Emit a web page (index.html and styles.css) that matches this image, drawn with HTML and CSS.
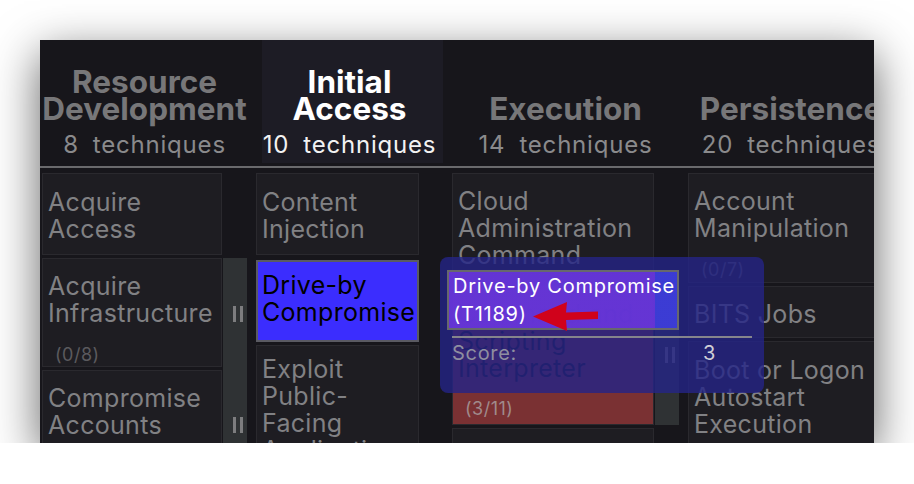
FILE: index.html
```html
<!DOCTYPE html>
<html lang="en">
<head>
<meta charset="utf-8">
<title>ATT&amp;CK Matrix</title>
<link rel="stylesheet" href="styles.css">
</head>
<body>
<div class="window">
  <div class="header">
    <div class="th th-rd">
      <div class="tname">Resource<br>Development</div>
      <div class="tcount"><span class="num">8</span>techniques</div>
    </div>
    <div class="th th-ia selected">
      <div class="tname">Initial<br>Access</div>
      <div class="tcount"><span class="num">10</span>techniques</div>
    </div>
    <div class="th th-ex">
      <div class="tname">Execution</div>
      <div class="tcount"><span class="num">14</span>techniques</div>
    </div>
    <div class="th th-pe">
      <div class="tname">Persistence</div>
      <div class="tcount"><span class="num">20</span>techniques</div>
    </div>
  </div>

  <div class="matrix">
    <div class="tactic t-rd">
      <div class="cell c1a">Acquire<br>Access</div>
      <div class="cell c1b">Acquire<br>Infrastructure<div class="count">(0/8)</div></div>
      <div class="side s1b"><span class="grip"></span></div>
      <div class="cell c1c">Compromise<br>Accounts<div class="count">(0/3)</div></div>
      <div class="side s1c"><span class="grip"></span></div>
    </div>

    <div class="tactic t-ia">
      <div class="cell c2a">Content<br>Injection</div>
      <div class="cell c2b blue">Drive-by<br>Compromise</div>
      <div class="cell c2c">Exploit<br>Public-<br>Facing<br>Application</div>
    </div>

    <div class="tactic t-ex">
      <div class="cell c3a">Cloud<br>Administration<br>Command</div>
      <div class="cell c3b red">Command and<br>Scripting<br>Interpreter<div class="count">(3/11)</div></div>
      <div class="side s3b"><span class="grip"></span></div>
      <div class="cell c3c">Container<br>Administration<br>Command</div>
    </div>

    <div class="tactic t-pe">
      <div class="cell c4a">Account<br>Manipulation<div class="count">(0/7)</div></div>
      <div class="side s4a"><span class="grip"></span></div>
      <div class="cell c4b">BITS Jobs</div>
      <div class="cell c4c">Boot or Logon<br>Autostart<br>Execution<div class="count">(0/14)</div></div>
      <div class="side s4c"><span class="grip"></span></div>
    </div>
  </div>

  <div class="tooltip">
    <div class="tt-title">Drive-by Compromise<br>(T1189)</div>
    <div class="tt-div"></div>
    <div class="tt-score"><span class="k">Score:</span><span class="v">3</span></div>
  </div>

  <svg class="arrow" width="72" height="34" viewBox="0 0 72 34" aria-hidden="true">
    <path d="M3 16.5 L37 2 L36 12.5 L68 11.5 L68 19 L36 20 L37 31 Z" fill="#d0021b"/>
  </svg>
</div>
</body>
</html>
```

FILE: styles.css
```css
html, body {
  margin: 0;
  padding: 0;
  background: #ffffff;
  overflow: hidden;
}

body {
  font-family: Inter, "Noto Sans", "Liberation Sans", sans-serif;
}

.window {
  position: relative;
  margin: 40px 0 0 40px;
  width: 834px;
  height: 403px;
  background: #17161b;
  overflow: hidden;
  box-shadow: 0 14px 44px rgba(0, 0, 0, 0.62);
}

/* ---------- header ---------- */
.header {
  display: flex;
  height: 126px;
  padding-left: 2px;
  border-bottom: 2px solid #6a6a6d;
}

.th {
  flex: none;
  display: flex;
  flex-direction: column;
  justify-content: flex-end;
  align-items: center;
  text-align: center;
  padding-bottom: 7px;
  white-space: nowrap;
}

.th-rd { width: 205px; }
.th-ia {
  width: 175px;
  padding-right: 6px;
  margin-left: 15px;
  margin-bottom: 3px;
  padding-bottom: 4px;
  background: #1d1c25;
}
.th-ex { width: 227px; margin-left: 9px; }
.th-pe { width: 206px; margin-left: 9px; }

.tname {
  font-weight: 700;
  font-size: 31.5px;
  line-height: 27px;
  color: #777779;
}

.tcount {
  margin-top: 9px;
  font-size: 24px;
  line-height: 28px;
  letter-spacing: 0.8px;
  color: #8a8a8c;
}

.num { margin-right: 14px; }

.selected .tname { color: #ffffff; }
.selected .tcount { color: #f2f2f2; }

/* ---------- matrix ---------- */
.matrix {
  display: flex;
  align-items: flex-start;
  padding: 5px 0 0 2px;
}

.tactic {
  flex: none;
  display: grid;
  column-gap: 1px;
  row-gap: 3px;
  margin-right: 9px;
}

.t-rd { grid-template-columns: 180px 24px; }
.t-ia { grid-template-columns: 163px 23px; }
.t-ex { grid-template-columns: 202px 24px; }
.t-pe { grid-template-columns: 200px 24px; }

.cell {
  grid-column: 1;
  box-sizing: border-box;
  border: 1px solid #2a292e;
  background: #1e1d22;
  color: #818184;
  font-size: 25px;
  line-height: 27px;
  letter-spacing: 0.3px;
  padding: 0 5px;
  white-space: nowrap;
  overflow: hidden;
}

.count {
  margin-top: 17px;
  padding-left: 7px;
  font-size: 18px;
  line-height: 22px;
  letter-spacing: 0.5px;
  color: #5b5a5e;
}

.side {
  grid-column: 2;
  background: #2f3234;
  display: flex;
  align-items: center;
  justify-content: center;
  padding-left: 6px;
}

.grip {
  display: block;
  width: 10px;
  height: 16px;
  box-sizing: border-box;
  border-left: 3px solid #7d7d7f;
  border-right: 3px solid #7d7d7f;
}

/* column 1 */
.c1a { grid-row: 1; height: 82px; padding-top: 15px; }
.c1b { grid-row: 2; height: 109px; padding-top: 14px; }
.s1b { grid-row: 2; margin-bottom: -3px; }
.c1c { grid-row: 3; height: 110px; padding-top: 14px; }
.s1c { grid-row: 3; }

/* column 2 */
.c2a { grid-row: 1; height: 82px; padding-top: 15px; }
.c2b { grid-row: 2; height: 82px; margin-top: 2px; padding: 10px 4px 0; }
.c2c { grid-row: 3; height: 120px; padding-top: 10px; }

.blue {
  background: #3b2dfe;
  border: 2px solid #5a5a62;
  color: #000000;
}

/* column 3 */
.c3a { grid-row: 1; height: 109px; padding-top: 14px; }
.c3b { grid-row: 2; height: 140px; padding-top: 15px; }
.s3b { grid-row: 2; }
.c3c { grid-row: 3; height: 110px; padding-top: 12px; }

.red {
  background: #7a3133;
  color: #151214;
}
.red .count {
  margin-top: 16px;
  color: #a08a8b;
}

/* column 4 */
.c4a { grid-row: 1; height: 110px; padding-top: 14px; }
.s4a { grid-row: 1; }
.c4b { grid-row: 2; height: 52px; padding-top: 14px; }
.c4c { grid-row: 3; height: 130px; padding-top: 15px; }
.s4c { grid-row: 3; }

/* ---------- tooltip ---------- */
.tooltip {
  position: absolute;
  left: 400px;
  top: 217px;
  width: 324px;
  height: 136px;
  box-sizing: border-box;
  padding: 13px 12px 0 7px;
  border-radius: 8px;
  background: rgba(36, 36, 135, 0.8);
}

.tt-title {
  width: 232px;
  height: 60px;
  box-sizing: border-box;
  border: 2px solid #67676d;
  padding: 0 4px;
  font-size: 20px;
  line-height: 28px;
  letter-spacing: 0.75px;
  color: #ffffff;
  white-space: nowrap;
  background: linear-gradient(90deg, rgba(106, 54, 222, 0.9) 0, rgba(106, 54, 222, 0.9) 206px, rgba(62, 62, 222, 0.9) 206px);
}

.tt-div {
  margin: 6px 0 0 5px;
  width: 300px;
  height: 2px;
  background: #85858c;
}

.tt-score {
  display: flex;
  margin: 3px 0 0 5px;
  font-size: 20px;
  line-height: 24px;
  letter-spacing: 0.7px;
}

.tt-score .k {
  width: 251px;
  color: #8e8ea0;
}

.tt-score .v {
  color: #cfcfd6;
}

.arrow {
  position: absolute;
  left: 490px;
  top: 260px;
}
```
